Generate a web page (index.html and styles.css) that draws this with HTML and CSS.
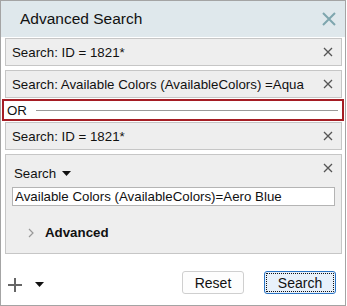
FILE: index.html
```html
<!DOCTYPE html>
<html>

<head>
  <title>Advanced Search</title>
  <link rel="stylesheet" href="styles.css">
</head>

<body>
  <div class="panel">
    <header class="panel-header">
      <h1>Advanced Search</h1>
      <svg class="close-big" width="16" height="16" viewBox="0 0 16 16">
        <path d="M2 2 L14 14 M14 2 L2 14" stroke="#7ea6ae" stroke-width="2" />
      </svg>
    </header>

    <div class="terms">
      <div class="term">
        <span>Search: ID = 1821*</span>
        <svg class="close" width="10" height="10" viewBox="0 0 10 10">
          <path d="M1 1 L9 9 M9 1 L1 9" stroke="#555" stroke-width="1.3" />
        </svg>
      </div>
      <div class="term">
        <span>Search: Available Colors (AvailableColors) =Aqua</span>
        <svg class="close" width="10" height="10" viewBox="0 0 10 10">
          <path d="M1 1 L9 9 M9 1 L1 9" stroke="#555" stroke-width="1.3" />
        </svg>
      </div>
      <div class="or-row">
        <span>OR</span>
        <div class="or-line"></div>
      </div>
      <div class="term">
        <span>Search: ID = 1821*</span>
        <svg class="close" width="10" height="10" viewBox="0 0 10 10">
          <path d="M1 1 L9 9 M9 1 L1 9" stroke="#555" stroke-width="1.3" />
        </svg>
      </div>
      <div class="term term-open">
        <div class="term-top">
          <span class="term-type">Search
            <svg width="9" height="5" viewBox="0 0 9 5"><path d="M0 0 H9 L4.5 5 Z" fill="#111" /></svg>
          </span>
          <svg class="close" width="10" height="10" viewBox="0 0 10 10">
            <path d="M1 1 L9 9 M9 1 L1 9" stroke="#555" stroke-width="1.3" />
          </svg>
        </div>
        <input class="term-input" type="text" value="Available Colors (AvailableColors)=Aero Blue">
        <div class="advanced">
          <svg width="6" height="10" viewBox="0 0 6 10"><path d="M1 1 L5 5 L1 9" stroke="#999" stroke-width="1.2" fill="none" /></svg>
          <span>Advanced</span>
        </div>
      </div>
    </div>

    <footer class="panel-footer">
      <div class="add">
        <svg width="16" height="16" viewBox="0 0 16 16">
          <path d="M8 1 V15 M1 8 H15" stroke="#666" stroke-width="2" />
        </svg>
        <svg width="9" height="5" viewBox="0 0 9 5"><path d="M0 0 H9 L4.5 5 Z" fill="#111" /></svg>
      </div>
      <button class="btn">Reset</button>
      <button class="btn btn-primary">Search</button>
    </footer>
  </div>
</body>

</html>
```

FILE: styles.css
```css
body {
    margin: 0;
    font-family: "Liberation Sans", Arial, sans-serif;
    background-color: #fff;
}

.panel {
    width: 346px;
    height: 306px;
    box-sizing: border-box;
    border: 1px solid #a4a4a4;
    display: flex;
    flex-direction: column;
}

.panel-header {
    height: 36px;
    background-color: #dfe8ec;
    display: flex;
    align-items: center;
    justify-content: space-between;
    padding: 0 8px 0 19px;
    flex-shrink: 0;
}

.panel-header h1 {
    margin: 0;
    font-size: 15.5px;
    font-weight: normal;
    color: #111;
}

.terms {
    display: flex;
    flex-direction: column;
    padding: 1px 3px 0 4px;
}

.term {
    height: 28px;
    box-sizing: border-box;
    margin-top: 4px;
    background-color: #eeeeee;
    border: 1px solid #c6c6c6;
    display: flex;
    align-items: center;
    justify-content: space-between;
    padding: 0 8px 0 6px;
    font-size: 13.3px;
    color: #111;
}

.term:first-child {
    margin-top: 0;
}

.close {
    flex-shrink: 0;
}

.or-row {
    margin: 1px -2px 0 -3px;
    height: 22px;
    box-sizing: border-box;
    border: 2px solid #a51d24;
    display: flex;
    align-items: center;
    padding-left: 3px;
    font-size: 13.3px;
    color: #111;
}

.or-line {
    flex: 1;
    height: 1px;
    margin: 0 4px 0 9px;
    background-color: #9a9a9a;
}

.or-row + .term {
    margin-top: 1px;
}

.term-open {
    height: 100px;
    flex-direction: column;
    align-items: stretch;
    justify-content: flex-start;
    padding: 8px 6px 0 6px;
}

.term-top {
    display: flex;
    justify-content: space-between;
    align-items: flex-start;
    padding: 0 2px 0 2px;
    height: 24px;
}

.term-type {
    display: flex;
    align-items: center;
    gap: 6px;
    padding-top: 3px;
}

.term-input {
    height: 19px;
    box-sizing: border-box;
    border: 1px solid #b4b4b4;
    font-family: inherit;
    font-size: 13.3px;
    padding: 0 2px;
    color: #111;
    margin: 0;
}

.advanced {
    display: flex;
    align-items: center;
    gap: 11px;
    padding: 19px 0 0 16px;
    font-size: 13.3px;
    font-weight: bold;
}

.panel-footer {
    margin-top: auto;
    display: flex;
    align-items: center;
    padding: 0 9px 11px 6px;
}

.add {
    display: flex;
    align-items: center;
    gap: 12px;
    margin-right: auto;
    padding-top: 4px;
}

.btn {
    height: 23px;
    width: 62px;
    font-family: inherit;
    font-size: 14px;
    color: #111;
    background-color: #fdfdfd;
    border: 1px solid #cfcfcf;
    border-radius: 3px;
    margin-left: 20px;
    padding: 0;
}

.btn-primary {
    width: 72px;
    background-color: #e8f1fb;
    border: 1px solid #2a74c4;
    outline: 1px dotted #111;
    outline-offset: -3px;
}
```
